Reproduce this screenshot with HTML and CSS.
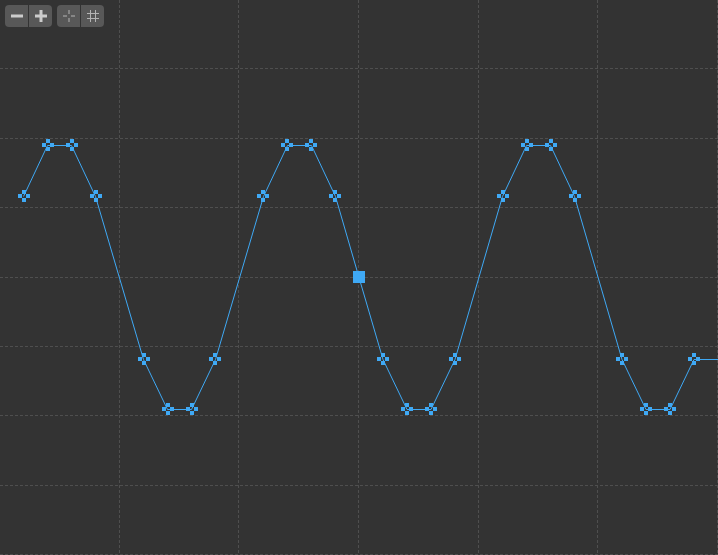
FILE: index.html
```html
<!DOCTYPE html>
<html lang="en">

<head>
    <meta charset="UTF-8">
    <title>Curve editor</title>
    <link rel="stylesheet" href="styles.css">
</head>

<body>
    <div class="editor">
        <svg class="plot" width="718" height="555" viewBox="0 0 718 555">
            <defs>
                <g id="key">
                    <rect x="-2" y="-6" width="4" height="4"></rect>
                    <rect x="-2" y="2" width="4" height="4"></rect>
                    <rect x="-6" y="-2" width="4" height="4"></rect>
                    <rect x="2" y="-2" width="4" height="4"></rect>
                </g>
            </defs>
            <path class="grid" d="M119.5 0V555M238.5 0V555M358.5 0V555M478.5 0V555M597.5 0V555M717.5 0V555"></path>
            <path class="grid" d="M0 68.5H718M0 138.5H718M0 207.5H718M0 277.5H718M0 346.5H718M0 415.5H718M0 485.5H718M0 554.5H718"></path>
            <polyline class="curve" points="23.5,196.5 47.5,145.5 71.5,145.5 95.5,196.5 143.5,359.5 167.5,409.5 191.5,409.5 215.5,359.5 263.5,196.5 287.5,145.5 311.5,145.5 335.5,196.5 359,277.5 383,359.5 407,409.5 431,409.5 455,359.5 502.5,196.5 526.5,145.5 550.5,145.5 574.5,196.5 622,359.5 646,409.5 670,409.5 694,359.5 718,359.5"></polyline>
            <g class="keys">
                <use href="#key" x="24" y="196"></use>
                <use href="#key" x="48" y="145"></use>
                <use href="#key" x="72" y="145"></use>
                <use href="#key" x="96" y="196"></use>
                <use href="#key" x="144" y="359"></use>
                <use href="#key" x="168" y="409"></use>
                <use href="#key" x="192" y="409"></use>
                <use href="#key" x="215" y="359"></use>
                <use href="#key" x="263" y="196"></use>
                <use href="#key" x="287" y="145"></use>
                <use href="#key" x="311" y="145"></use>
                <use href="#key" x="335" y="196"></use>
                <use href="#key" x="383" y="359"></use>
                <use href="#key" x="407" y="409"></use>
                <use href="#key" x="431" y="409"></use>
                <use href="#key" x="455" y="359"></use>
                <use href="#key" x="503" y="196"></use>
                <use href="#key" x="527" y="145"></use>
                <use href="#key" x="551" y="145"></use>
                <use href="#key" x="575" y="196"></use>
                <use href="#key" x="622" y="359"></use>
                <use href="#key" x="646" y="409"></use>
                <use href="#key" x="670" y="409"></use>
                <use href="#key" x="694" y="359"></use>
                <rect x="353" y="271" width="12" height="12"></rect>
            </g>
        </svg>

        <div class="toolbar">
            <div class="btn-group">
                <button class="btn" title="Zoom out">
                    <svg width="12" height="12" viewBox="0 0 12 12">
                        <path class="icon-bold" d="M0 6H12"></path>
                    </svg>
                </button>
                <button class="btn" title="Zoom in">
                    <svg width="12" height="12" viewBox="0 0 12 12">
                        <path class="icon-bold" d="M0 6H12M6 0V12"></path>
                    </svg>
                </button>
            </div>
            <div class="btn-group">
                <button class="btn" title="Center view">
                    <svg width="12" height="12" viewBox="0 0 12 12">
                        <path class="icon-thin" d="M0 6H4M8 6H12M6 0V4M6 8V12"></path>
                    </svg>
                </button>
                <button class="btn" title="Snap to grid">
                    <svg width="12" height="12" viewBox="0 0 12 12">
                        <path class="icon-thin" d="M0 3.5H12M0 8.5H12M3.5 0V12M8.5 0V12"></path>
                    </svg>
                </button>
            </div>
        </div>
    </div>
</body>

</html>
```

FILE: styles.css
```css
body {
    margin: 0;
    background: #333333;
    overflow: hidden;
}

.editor {
    position: relative;
    width: 718px;
    height: 555px;
}

.plot {
    display: block;
}

.grid {
    fill: none;
    stroke: #4f4f4f;
    stroke-width: 1;
    stroke-dasharray: 3 2;
}

.curve {
    fill: none;
    stroke: #3fa9f5;
    stroke-width: 1;
}

.keys {
    fill: #3fa9f5;
}

.toolbar {
    position: absolute;
    top: 5px;
    left: 5px;
    display: flex;
    gap: 5px;
}

.btn-group {
    display: flex;
    gap: 1px;
}

.btn {
    display: flex;
    align-items: center;
    justify-content: center;
    width: 23px;
    height: 22px;
    padding: 0;
    border: 0;
    background: #585858;
}

.btn-group .btn:first-child {
    border-radius: 4px 0 0 4px;
}

.btn-group .btn:last-child {
    border-radius: 0 4px 4px 0;
}

.icon-bold {
    fill: none;
    stroke: #cccccc;
    stroke-width: 3;
}

.icon-thin {
    fill: none;
    stroke: #b4b4b4;
    stroke-width: 1;
}
```
